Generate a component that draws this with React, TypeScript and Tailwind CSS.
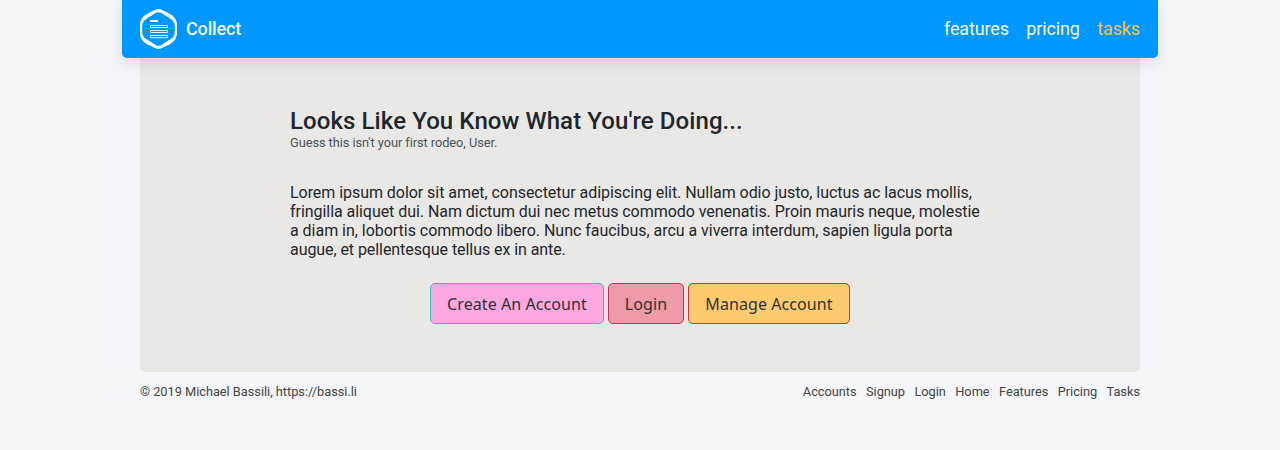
const navLinks = ["features", "pricing", "tasks"];
const footerLinks = ["Accounts", "Signup", "Login", "Home", "Features", "Pricing", "Tasks"];

function Logo() {
  return (
    <svg className="h-10 w-[37px] shrink-0" viewBox="0 0 37 40" fill="none">
      <path
        fill="#fff"
        fillRule="evenodd"
        d="M15.5 .7Q18.5 -.7 21.5 .7C26 2.8 29 4 32.5 6.5Q36.3 9.7 36.9 14Q37.3 20 36.9 26Q36.3 30.3 32.5 33.5C29 36 26 37.2 21.5 39.3Q18.5 40.7 15.5 39.3C11 37.2 8 36 4.5 33.5Q.7 30.3 .1 26Q-.3 20 .1 14Q.7 9.7 4.5 6.5C8 4 11 2.8 15.5 .7ZM16 3.8C12 6.4 9.5 7.8 6.5 9.7Q2.9 12 2.4 15Q1.8 20 2.4 25Q2.9 28 6.5 30.3C9.5 32.2 12 33.6 16 36.2Q18.5 37.3 21 36.2C25 33.6 27.5 32.2 30.5 30.3Q34.1 28 34.6 25Q35.2 20 34.6 15Q34.1 12 30.5 9.7C27.5 7.8 25 6.4 21 3.8Q18.5 2.7 16 3.8Z"
      />
      <path fill="#fff" d="M10 11h8v2h-8z" />
      <path stroke="#fff" strokeWidth="0.9" d="M10.5 16.5h17v2h-17zM10.5 21.5h17v2h-17zM10.5 26.5h17v2.2h-17z" />
    </svg>
  );
}

export default function App() {
  return (
    <div className="min-h-[450px] bg-[#f5f6fa] font-['Roboto',sans-serif] text-[#1e272e]">
      <header className="relative mx-auto flex h-[58px] w-[1036px] items-center justify-between rounded-b-[5px] bg-[#0097ff] px-[18px] text-[18px] text-[#f5f6fa] shadow-[0_5px_15px_rgba(0,0,0,0.1)]">
        <div className="flex items-center gap-[9px]">
          <Logo />
          <span className="pb-[2px] font-medium tracking-[-0.15px]">Collect</span>
        </div>
        <nav className="flex gap-[17.5px] pb-[2px] tracking-[-0.14px]">
          {navLinks.map((link) => (
            <a key={link} className={link === "tasks" ? "text-[#fbc531]" : "text-[#f5f6fa]"}>
              {link}
            </a>
          ))}
        </nav>
      </header>
      <main className="mx-auto h-[314px] w-[1000px] rounded-b-[5px] bg-[#eae8e4] px-[150px] pt-[49px]">
        <h1 className="text-[24px] leading-[28px] font-medium tracking-[0.085px]">
          Looks Like You Know What You're Doing...
        </h1>
        <p className="text-[12.8px] leading-[15px] tracking-[-0.06px] text-[#485460]">
          Guess this isn't your first rodeo, User.
        </p>
        <p className="mt-[33px] text-[16px] leading-[19px] tracking-[-0.05px]">
          Lorem ipsum dolor sit amet, consectetur adipiscing elit. Nullam odio justo, luctus ac lacus mollis,
          <br />
          fringilla aliquet dui. Nam dictum dui nec metus commodo venenatis. Proin mauris neque, molestie
          <br />
          <span className="tracking-[-0.03px]">
            a diam in, lobortis commodo libero. Nunc faucibus, arcu a viverra interdum, sapien ligula porta
          </span>
          <br />
          <span className="tracking-[-0.07px]">augue, et pellentesque tellus ex in ante.</span>
        </p>
        <div className="mt-[24px] flex justify-center gap-1 font-['Noto_Sans',sans-serif] text-[16px] tracking-[0.08px] text-[#2d3436]">
          <button className="h-[41px] w-[174px] rounded-[5px] border border-[#12cbc4] bg-[#fda7df]">
            Create An Account
          </button>
          <button className="h-[41px] w-[76px] rounded-[5px] border border-[#b53471] bg-[#ee9ba7]">Login</button>
          <button className="h-[41px] w-[162px] rounded-[5px] border border-[#d63031] bg-[#fdcb6e]">
            Manage Account
          </button>
        </div>
      </main>
      <footer className="mx-auto mt-[12px] flex w-[1000px] justify-between text-[12.8px] leading-[15px] tracking-[-0.025px] text-[#444]">
        <span>© 2019 Michael Bassili, https://bassi.li</span>
        <nav className="flex gap-[9.4px]">
          {footerLinks.map((link) => (
            <a key={link}>{link}</a>
          ))}
        </nav>
      </footer>
    </div>
  );
}
